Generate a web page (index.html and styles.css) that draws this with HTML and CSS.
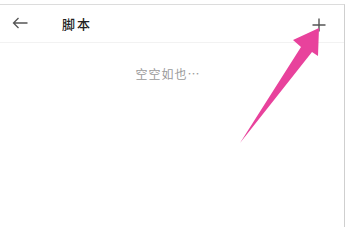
FILE: index.html
```html
<!DOCTYPE html>
<html lang="zh">
<head>
<meta charset="utf-8">
<link rel="stylesheet" href="styles.css">
</head>
<body>
<div class="screen">
  <header class="bar">
    <svg class="back" width="16" height="12" viewBox="0 0 16 12"><path d="M15.5 6H1.5M6.5 1L1.5 6L6.5 11" fill="none" stroke="#555" stroke-width="1.3"/></svg>
    <span class="title">脚本</span>
    <span class="spacer"></span>
    <svg class="plus" width="14" height="14" viewBox="0 0 14 14"><path d="M7 0.5V13.5M0.5 7H13.5" fill="none" stroke="#555" stroke-width="1.4"/></svg>
  </header>
  <main class="content">
    <p class="empty">空空如也…</p>
  </main>
</div>
<svg class="annot" width="349" height="227" viewBox="0 0 349 227">
  <polygon points="319,28 318,56 312,52 240,143 301,47 293,40" fill="#e8429c"/>
</svg>
</body>
</html>
```
FILE: styles.css
```css
html, body {
  margin: 0;
  padding: 0;
  background: #fff;
  width: 349px;
  height: 227px;
  overflow: hidden;
}
body {
  position: relative;
  font-family: "Noto Sans CJK SC", "Noto Sans", sans-serif;
}
.screen {
  margin-top: 4px;
  width: 345px;
  height: 223px;
  border-top: 1px solid #dcdcdc;
  border-right: 1px solid #cfcfcf;
  box-sizing: border-box;
  display: flex;
  flex-direction: column;
}
.bar {
  height: 38px;
  display: flex;
  align-items: center;
  padding: 0 18px 0 12px;
  border-bottom: 1px solid #f2f2f2;
  box-sizing: border-box;
}
.back {
  display: block;
  margin-top: -2px;
}
.title {
  margin-left: 34px;
  font-size: 13px;
  font-weight: 500;
  color: #222;
  letter-spacing: 2px;
}
.spacer { flex: 1; }
.plus {
  display: block;
  margin-top: 3px;
}
.content {
  flex: 1;
  padding-right: 8px;
}
.empty {
  margin: 22px 0 0;
  text-align: center;
  font-size: 12px;
  color: #9a9a9a;
  letter-spacing: 1px;
}
.annot {
  position: absolute;
  left: 0;
  top: 0;
  pointer-events: none;
}
```
